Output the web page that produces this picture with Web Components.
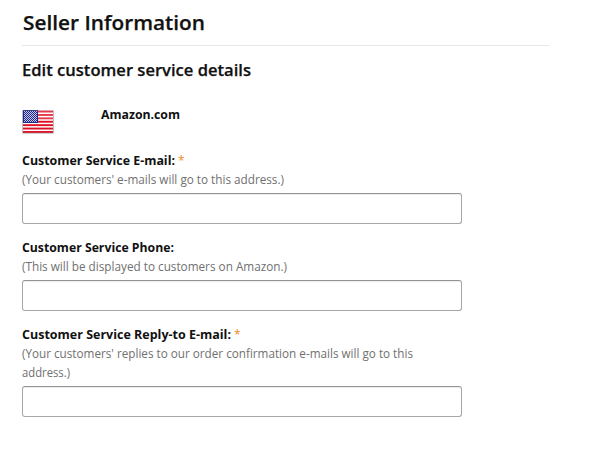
<!DOCTYPE html>
<html lang="en"><head><meta charset="utf-8"><title>Seller Information</title>
<style>body{margin:0;background:#fff;color:#111;font:13px/19px "Open Sans","Noto Sans",sans-serif}</style></head><body>
<seller-page>
<flag-row slot="market">Amazon.com</flag-row>
<form-field required label="Customer Service E-mail:" label-width="153" hint="(Your customers' e-mails will go to this address.)" widths="262"></form-field>
<form-field label="Customer Service Phone:" label-width="152" hint="(This will be displayed to customers on Amazon.)" widths="265"></form-field>
<form-field required label="Customer Service Reply-to E-mail:" label-width="209" hint="(Your customers' replies to our order confirmation e-mails will go to this|address.)" widths="391|48"></form-field>
</seller-page>
<script>
const fitText = (text, width) => `<svg class="fit" width="${width}" height="19"><text x="0" y="14" textLength="${width}" lengthAdjust="spacingAndGlyphs">${text}</text></svg>`;
class SellerPage extends HTMLElement{
 constructor(){super();this.attachShadow({mode:'open'}).innerHTML=`
 <style>:host{display:block;width:527px;padding:6px 0 0 22px}
 svg{display:block;fill:#111;font-weight:600;overflow:visible;stroke:#111;stroke-width:.25px}
 header{height:39px;border-bottom:1px solid #e7e7e7}
 .sub{margin-top:12px;height:45px}.fields{width:440px}</style>
 <header><svg width="183" height="30"><text x="1" y="24" font-size="20.5" textLength="182" lengthAdjust="spacingAndGlyphs">Seller Information</text></svg></header>
 <svg class="sub" width="230" height="45"><text y="18" font-size="16.5" textLength="229" lengthAdjust="spacingAndGlyphs">Edit customer service details</text></svg>
 <slot name="market"></slot><div class="fields"><slot></slot></div>`}}
class FlagRow extends HTMLElement{
 constructor(){super();let stripes='';
 for(let i=0;i<7;i++)stripes+=`<rect x="1" y="${(i*3.4+.6).toFixed(1)}" width="30" height="1.9" fill="${i<3?'#e5384b':'#dc0f24'}"/>`;
 let stars='';for(let y=0;y<11;y++)for(let x=y%2;x<13;x+=2)stars+=`<rect x="${x+2}" y="${y+1}" width="1" height="1" fill="#c3c6e6"/>`;
 this.attachShadow({mode:'open'}).innerHTML=`<style>:host{display:flex;height:48px}.flag{width:32px;height:24px;margin:7px 47px 0 0}.name{display:block;fill:#111;font-weight:700;font-size:12.5px;overflow:visible}</style>
 <svg class="flag" viewBox="0 0 32 24"><rect x=".5" y=".5" width="31" height="23" rx=".5" fill="#bbb"/><rect x="1" width="30" height="23" fill="#fff"/>${stripes}<rect x="1" width="15" height="13" fill="#20288a"/>${stars}<rect x=".5" y=".2" width="31" height="22.9" fill="none" stroke="#888" stroke-opacity=".35"/></svg>
 <svg class="name" width="90" height="19"><text y="16" textLength="79" lengthAdjust="spacingAndGlyphs">Amazon.com</text></svg>`}}
class FormField extends HTMLElement{
 connectedCallback(){const g=n=>this.getAttribute(n),w=g('widths').split('|');
 this.attachShadow({mode:'open'}).innerHTML=`<style>:host{display:block;margin-bottom:14px}.label{display:flex;gap:3px;height:19px;font-weight:700;font-size:12.3px}.fit{display:block;flex:none;fill:currentColor;overflow:visible}.hint{font-size:12px;color:#707070}.star{color:#f08c1c;font-weight:400;font-size:12px;line-height:20px}input{display:block;box-sizing:border-box;width:440px;height:31px;margin-top:4px;border:1px solid #a6a6a6;border-top-color:#949494;border-radius:3px;background:#fff;padding:3px 7px;box-shadow:inset 0 1px 0 #eee}</style>
 <div class="label">${fitText(g('label'),g('label-width'))}${this.hasAttribute('required')?'<span class="star">*</span>':''}</div>
 <div class="hint">${g('hint').split('|').map((t,i)=>fitText(t,w[i])).join('')}</div><input aria-label="${g('label')}">`}}
customElements.define('seller-page',SellerPage);customElements.define('flag-row',FlagRow);customElements.define('form-field',FormField);
</script></body></html>
